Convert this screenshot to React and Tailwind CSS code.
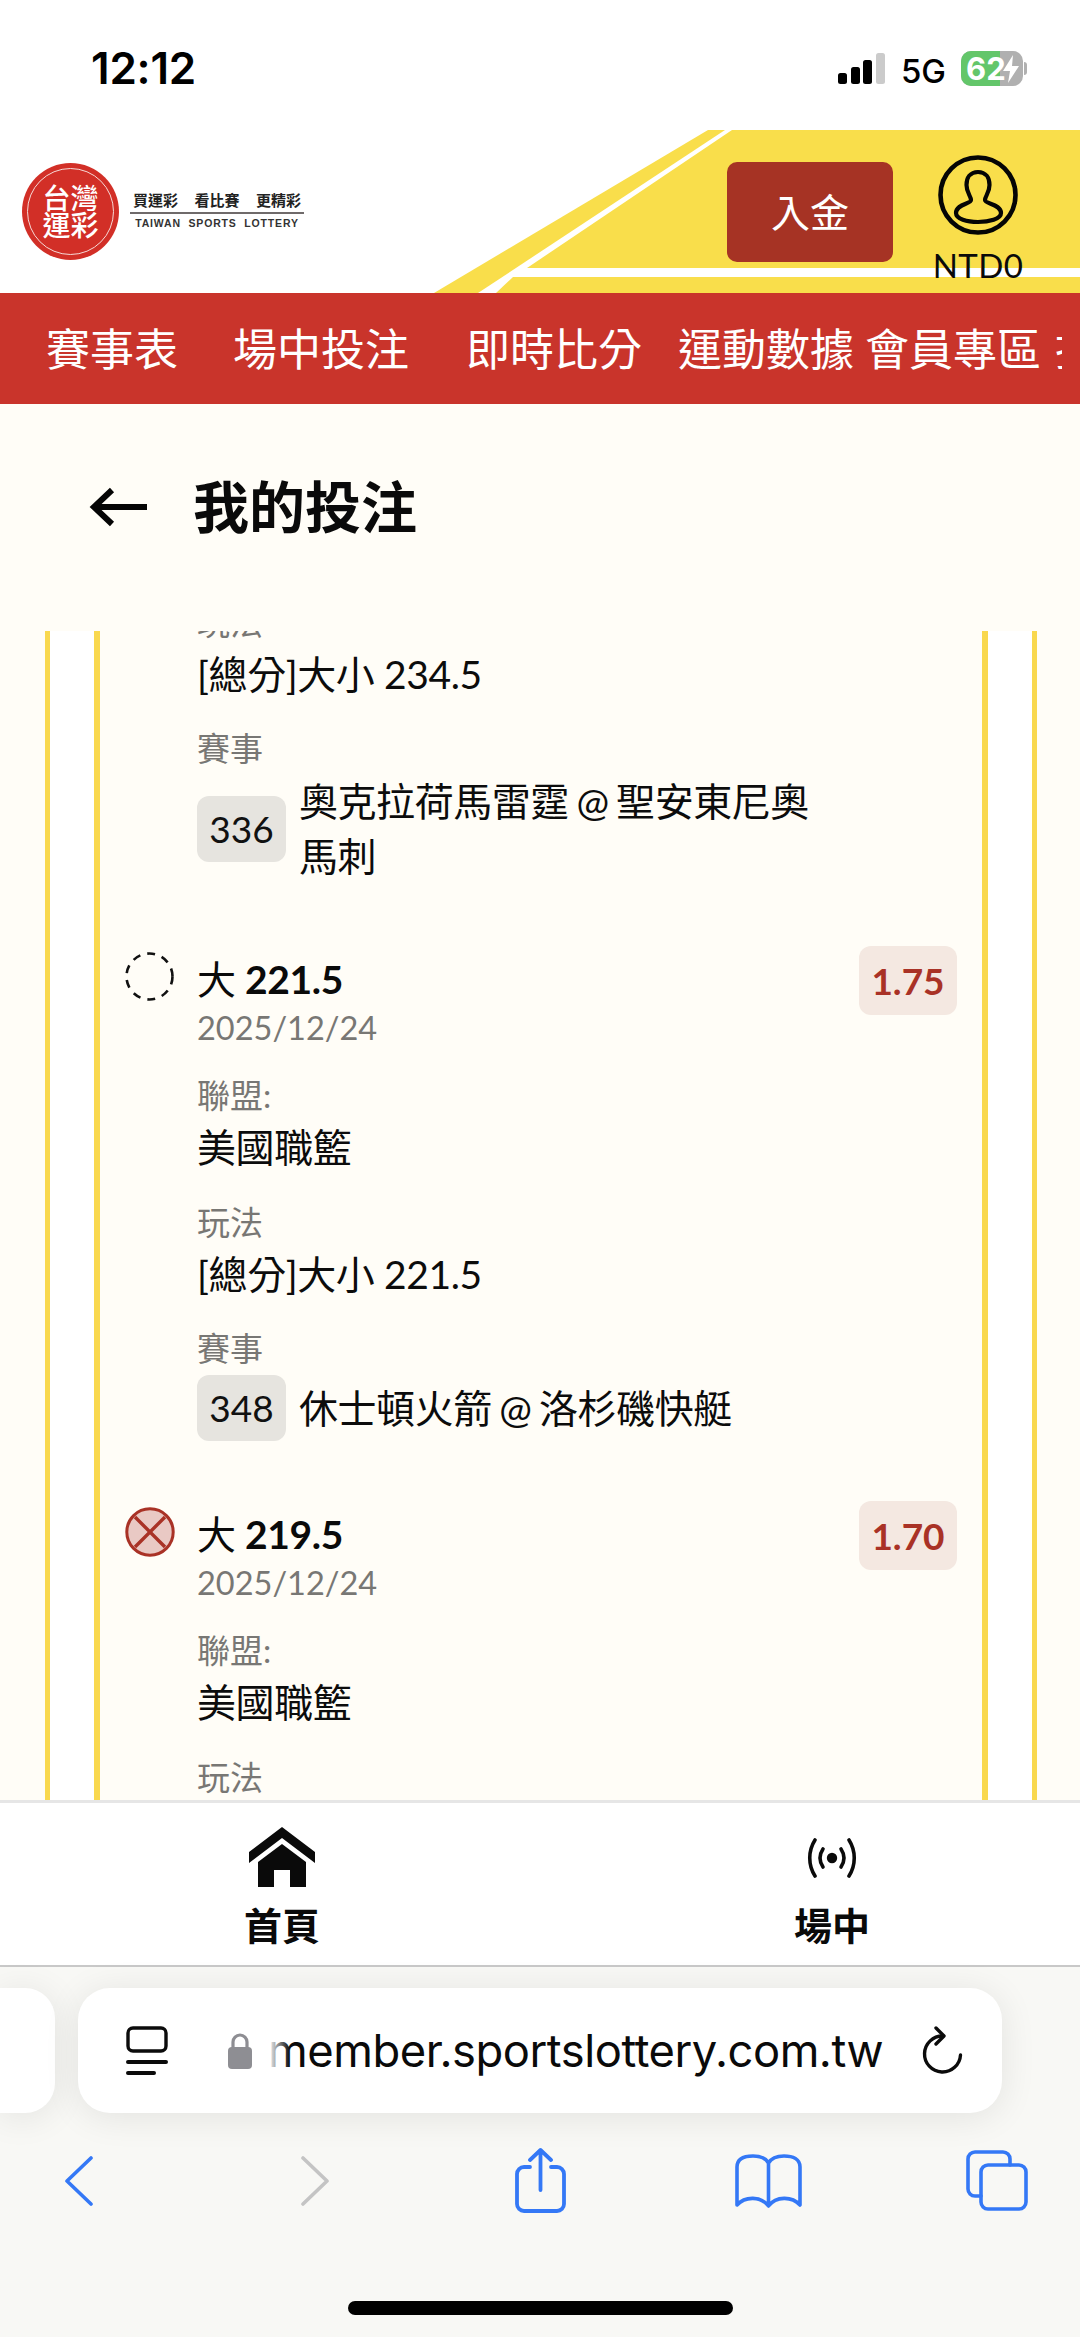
import React from "react";

const Label = ({ children, className = "" }) => (
  <div className={`h-[48px] text-[33px] leading-[48px] text-[#787774] ${className}`}>{children}</div>
);

const Value = ({ children }) => (
  <div className="h-[56px] text-[39px] leading-[56px] tracking-[-0.4px] text-[#0c0c0c]">{children}</div>
);

const Pending = () => (
  <svg width="49" height="49" viewBox="0 0 49 49" className="shrink-0 -mt-[2px]">
    <circle cx="24.5" cy="24.5" r="23" fill="none" stroke="#111" strokeWidth="2.6" strokeDasharray="8 7.05" />
  </svg>
);

const Lost = () => (
  <svg width="50" height="50" viewBox="0 0 50 50" className="shrink-0 -mt-[2px]">
    <circle cx="25" cy="25" r="23.2" fill="#E9C9C4" stroke="#A93226" strokeWidth="3" />
    <path d="M10 10 L40 40 M40 10 L10 40" stroke="#A93226" strokeWidth="3.4" />
  </svg>
);

const BetHead = ({ icon, total, odds }) => (
  <div className="flex">
    <div className="w-[72px] shrink-0">{icon}</div>
    <div className="flex-1">
      <div className="flex items-start justify-between">
        <div className="h-[50px] text-[39px] font-bold leading-[50px] tracking-[-0.3px] text-[#0a0a0a]">
          <span className="font-normal">大</span> {total}
        </div>
        <div className="-mt-[8px] flex h-[69px] w-[98px] items-center justify-center rounded-[12px] bg-[#F4E8E1] text-[37px] font-bold text-[#A93226]">
          {odds}
        </div>
      </div>
      <div className="-mt-[11px] h-[48px] text-[32.5px] leading-[48px] text-[#787774]">2025/12/24</div>
    </div>
  </div>
);

const MatchRow = ({ code, teams }) => (
  <div className="flex items-center">
    <div className="flex h-[66px] w-[89px] shrink-0 items-center justify-center rounded-[12px] bg-[#E6E4DF] text-[37px] text-[#111]">
      {code}
    </div>
    <div className="ml-[13px] max-w-[535px] text-[39px] leading-[55px] tracking-[-0.45px] [word-spacing:-2px] text-[#0c0c0c]">{teams}</div>
  </div>
);

const Tagline = () => (
  <div className="ml-[11px] -mt-[3px] flex w-[174px] flex-col">
    <div className="flex justify-between px-[3px] text-[15px] font-bold leading-[20px] text-[#222]">
      <span>買運彩</span>
      <span>看比賽</span>
      <span>更精彩</span>
    </div>
    <div className="mt-[2px] h-[2px] bg-[#6f6a6a]" />
    <div className="mt-[2px] text-center text-[10.5px] font-bold leading-[14px] tracking-[0.85px] text-[#333] font-['Liberation_Sans',sans-serif] whitespace-pre">
      TAIWAN  SPORTS  LOTTERY
    </div>
  </div>
);

const Logo = () => (
  <div className="flex items-center">
    <div className="flex h-[97px] w-[97px] items-center justify-center rounded-full bg-[#D22F27]">
      <div className="flex h-[87px] w-[87px] flex-col items-center justify-center rounded-full border-[1.5px] border-[#F6D9D6] text-[28px] font-medium leading-[27px] text-white">
        <span>台灣</span>
        <span>運彩</span>
      </div>
    </div>
    <Tagline />
  </div>
);

const Avatar = () => (
  <svg width="80" height="80" viewBox="0 0 80 80" fill="none" stroke="#050505">
    <circle cx="40" cy="40" r="37.5" strokeWidth="4.6" />
    <path
      d="M40 17C32 17 28.5 23 28.5 30C28.5 38 33 41 33 45C33 49 18 49 18 58C18 64 29 67 40 67C51 67 63 64 63 58C63 49 47 49 47 45C47 41 51.5 38 51.5 30C51.5 23 48 17 40 17Z"
      strokeWidth="4.2"
      strokeLinejoin="round"
    />
  </svg>
);

const HouseIcon = () => (
  <svg width="66" height="60" viewBox="0 0 66 60" fill="#0a0a0a">
    <path d="M33 0L66 25V36L33 11L0 36V25Z" />
    <path d="M33 17L57 35V60H41V43H25V60H9V35Z" />
  </svg>
);

const LiveIcon = () => (
  <svg width="50" height="40" viewBox="0 0 50 40" fill="none" stroke="#0a0a0a" strokeWidth="3.6" strokeLinecap="round">
    <path d="M8 2C1 13 1 27 8 38" />
    <path d="M42 2C49 13 49 27 42 38" />
    <path d="M16 11C12 17 12 23 16 29" />
    <path d="M34 11C38 17 38 23 34 29" />
    <circle cx="25" cy="20" r="5.2" fill="#0a0a0a" stroke="none" />
  </svg>
);

const TabOverview = () => (
  <svg width="42" height="49" viewBox="0 0 42 49" fill="none" stroke="#0b0b0b">
    <rect x="2" y="2" width="38" height="23" rx="5" strokeWidth="3.4" />
    <path d="M2 36H40M2 47H28" strokeWidth="4" strokeLinecap="round" />
  </svg>
);

const LockIcon = () => (
  <svg width="24" height="37" viewBox="0 0 24 37" className="shrink-0">
    <path d="M5 17V10a7 7 0 0 1 14 0v7" fill="none" stroke="#8E8E93" strokeWidth="3.2" />
    <rect x="0" y="15" width="24" height="22" rx="4" fill="#8E8E93" />
  </svg>
);

const ReloadIcon = () => (
  <svg width="41" height="49" viewBox="0 0 41 49" fill="none" stroke="#0b0b0b" strokeWidth="3.4" strokeLinecap="round" strokeLinejoin="round">
    <path d="M21 10A18 18 0 1 0 38.5 29" />
    <path d="M14 2L22 10L14 18" />
  </svg>
);

const ToolIcon = ({ w, h, children, stroke = "#3478F6", sw = 3.6, className = "" }) => (
  <svg width={w} height={h} viewBox={`0 0 ${w} ${h}`} className={`shrink-0 ${className}`} fill="none" stroke={stroke} strokeWidth={sw} strokeLinecap="round" strokeLinejoin="round">
    {children}
  </svg>
);

export default function App() {
  return (
    <div className="flex h-[2337px] w-[1080px] flex-col overflow-hidden bg-white font-[Lato,'Noto_Sans_CJK_TC',sans-serif]">
      {/* status bar */}
      <div className="flex h-[130px] shrink-0 items-start justify-between pl-[91px] pr-[53px] pt-[43px]">
        <div className="text-[44px] font-semibold leading-[50px] tracking-[-0.2px] text-black font-['Inter',sans-serif]">12:12</div>
        <div className="flex items-start pt-[8px]">
          <div className="mt-[2px] flex h-[31px] items-end gap-[3.5px]">
            <div className="h-[11px] w-[9px] rounded-[2.5px] bg-black" />
            <div className="h-[17px] w-[9px] rounded-[2.5px] bg-black" />
            <div className="h-[24px] w-[9px] rounded-[2.5px] bg-black" />
            <div className="h-[31px] w-[9px] rounded-[2.5px] bg-[#CBCBCB]" />
          </div>
          <div className="ml-[16px] text-[33px] font-medium leading-[40px] text-black font-['Inter',sans-serif]">5G</div>
          <div className="relative ml-[15px] flex h-[35px] w-[62px] overflow-hidden rounded-[10px] bg-[#B0B0B0]">
            <div className="h-full w-[39px] bg-[#63C66A]" />
            <div className="absolute left-[5px] top-0 text-[31px] font-bold leading-[35px] text-white font-['Inter',sans-serif]">62</div>
            <svg width="18" height="28" viewBox="0 0 18 28" className="absolute left-[41px] top-[4px]">
              <path d="M11 0L1 16H8L6 28L17 11H10Z" fill="#fff" />
            </svg>
          </div>
          <div className="ml-[1px] mt-[11px] h-[13px] w-[3px] rounded-r-[3px] bg-[#B0B0B0]" />
        </div>
      </div>

      {/* brand header */}
      <div className="relative flex h-[163px] shrink-0 items-center">
        <svg width="1080" height="163" viewBox="0 0 1080 163" className="absolute inset-0">
          <path d="M434 163L708 0H725L478 163Z" fill="#F9DE4B" />
          <path d="M496 163L513 147H1080V163Z" fill="#F9DE4B" />
          <path d="M732 0H1080V138H527Z" fill="#F9DE4B" />
        </svg>
        <div className="relative ml-[22px] flex flex-1 items-start">
          <Logo />
        </div>
        <div className="relative mr-[62px] flex items-start self-start pt-[25px]">
          <div className="mt-[7px] flex h-[100px] w-[166px] items-center justify-center rounded-[10px] bg-[#A63324] text-[39px] text-white">
            入金
          </div>
          <div className="ml-[45px] flex w-[80px] flex-col items-center">
            <Avatar />
            <div className="mt-[10px] text-[33px] leading-[40px] tracking-[0.4px] text-[#0a0a0a]">NTD0</div>
          </div>
        </div>
      </div>

      {/* main navigation */}
      <div className="flex h-[111px] shrink-0 bg-[#C9342B]">
        <div className="flex w-[1062px] items-center overflow-hidden whitespace-nowrap pl-[46px] text-[44px] leading-[60px] text-white">
          <span className="shrink-0">賽事表</span>
          <span className="ml-[55px] shrink-0">場中投注</span>
          <span className="ml-[57px] shrink-0">即時比分</span>
          <span className="ml-[36px] shrink-0">運動數據</span>
          <span className="ml-[11px] shrink-0">會員專區</span>
          <span className="ml-[14px] shrink-0">投注</span>
        </div>
      </div>

      {/* page title */}
      <div className="flex h-[227px] shrink-0 items-center bg-[#FFFDF7] pb-[22px] pl-[89px]">
        <svg width="58" height="40" viewBox="0 0 58 40" fill="none" stroke="#050505" strokeWidth="6">
          <path d="M58 20H5M23 3L5 20L23 37" />
        </svg>
        <div className="ml-[46px] text-[56px] font-bold leading-[70px] text-[#0a0a0a]">我的投注</div>
      </div>

      {/* bet list */}
      <div className="h-[1169px] shrink-0 overflow-hidden bg-[#FFFDF7] pl-[45px] pr-[43px]">
        <div className="h-full border-x-[5px] border-[#F9D84E] bg-white px-[44px]">
          <div className="h-full overflow-hidden border-x-[6px] border-[#F9D84E] bg-[#FFFDF7] pl-[25px] pr-[25px]">
            <div className="-mt-[33px]">
              <div className="ml-[72px]">
                <Label>玩法</Label>
                <Value>[總分]大小 234.5</Value>
                <Label className="mt-[22px]">賽事</Label>
                <div className="mt-[2px]">
                  <MatchRow code="336" teams="奧克拉荷馬雷霆 @ 聖安東尼奧馬刺" />
                </div>
              </div>

              <div className="mt-[70px]">
                <BetHead icon={<Pending />} total="221.5" odds="1.75" />
                <div className="ml-[72px]">
                  <Label className="mt-[19px]">聯盟:</Label>
                  <Value>美國職籃</Value>
                  <Label className="mt-[23px]">玩法</Label>
                  <Value>[總分]大小 221.5</Value>
                  <Label className="mt-[22px]">賽事</Label>
                  <div className="mt-[3px]">
                    <MatchRow code="348" teams="休士頓火箭 @ 洛杉磯快艇" />
                  </div>
                </div>
              </div>

              <div className="mt-[68px]">
                <BetHead icon={<Lost />} total="219.5" odds="1.70" />
                <div className="ml-[72px]">
                  <Label className="mt-[19px]">聯盟:</Label>
                  <Value>美國職籃</Value>
                  <Label className="mt-[23px]">玩法</Label>
                </div>
              </div>
            </div>
          </div>
        </div>
      </div>

      {/* site tab bar */}
      <div className="flex h-[167px] shrink-0 border-y-[3px] border-b-[2px] border-t-[#E6E6E6] border-b-[#C8C8C8] bg-white">
        <div className="flex w-[564px] shrink-0 flex-col items-center pt-[24px]">
          <HouseIcon />
          <div className="mt-[15px] text-[38px] font-bold leading-[46px] text-[#0a0a0a]">首頁</div>
        </div>
        <div className="flex flex-1 flex-col items-center pl-[20px] pt-[35px]">
          <LiveIcon />
          <div className="mt-[24px] text-[38px] font-bold leading-[46px] text-[#0a0a0a]">場中</div>
        </div>
      </div>

      {/* browser chrome */}
      <div className="flex min-h-0 flex-1 flex-col bg-[#F8F8F5]">
        <div className="mt-[21px] flex h-[125px] shrink-0 items-stretch gap-[23px]">
          <div className="w-[55px] rounded-r-[30px] bg-white shadow-[0_4px_36px_rgba(0,0,0,0.09)]" />
          <div className="flex w-[924px] items-center rounded-[32px] bg-white pl-[48px] pr-[39px] shadow-[0_4px_36px_rgba(0,0,0,0.09)]">
            <TabOverview />
            <div className="ml-[60px]">
              <LockIcon />
            </div>
            <div className="relative ml-[16px] flex-1 whitespace-nowrap text-[45.3px] leading-[56px] tracking-[-0.45px] text-[#0a0a0a] font-['Inter',sans-serif]">
              member.sportslottery.com.tw
              <div className="absolute bottom-0 left-0 top-0 w-[22px] bg-gradient-to-r from-white to-transparent" />
            </div>
            <ReloadIcon />
          </div>
        </div>
        <div className="mt-[35px] flex h-[65px] shrink-0 items-center pl-[65px]">
          <ToolIcon w={28} h={50}><path d="M26 2L2 25L26 48" /></ToolIcon>
          <ToolIcon w={28} h={50} stroke="#C4C4C4" className="ml-[208px]"><path d="M2 2L26 25L2 48" /></ToolIcon>
          <ToolIcon w={51} h={65} sw={3.8} className="ml-[186px]">
            <path d="M15 19H9a7 7 0 0 0-7 7V56a7 7 0 0 0 7 7H42a7 7 0 0 0 7-7V26a7 7 0 0 0-7-7H36" />
            <path d="M25.5 42V2M15 12L25.5 2L36 12" />
          </ToolIcon>
          <ToolIcon w={67} h={54} className="ml-[169px]">
            <path d="M33.5 9C30 3 24 2 18 2C9 2 2 5 2 13V51C10 42 26 42 33.5 52C41 42 57 42 65 51V13C65 5 58 2 49 2C43 2 37 3 33.5 9V52" />
          </ToolIcon>
          <ToolIcon w={62} h={61} className="ml-[164px]">
            <rect x="15" y="15" width="45" height="44" rx="7" />
            <path d="M15 46H9a7 7 0 0 1-7-7V9a7 7 0 0 1 7-7H37a7 7 0 0 1 7 7v6" />
          </ToolIcon>
        </div>
        <div className="mx-auto mt-[88px] h-[14px] w-[385px] shrink-0 rounded-full bg-black" />
      </div>
    </div>
  );
}
